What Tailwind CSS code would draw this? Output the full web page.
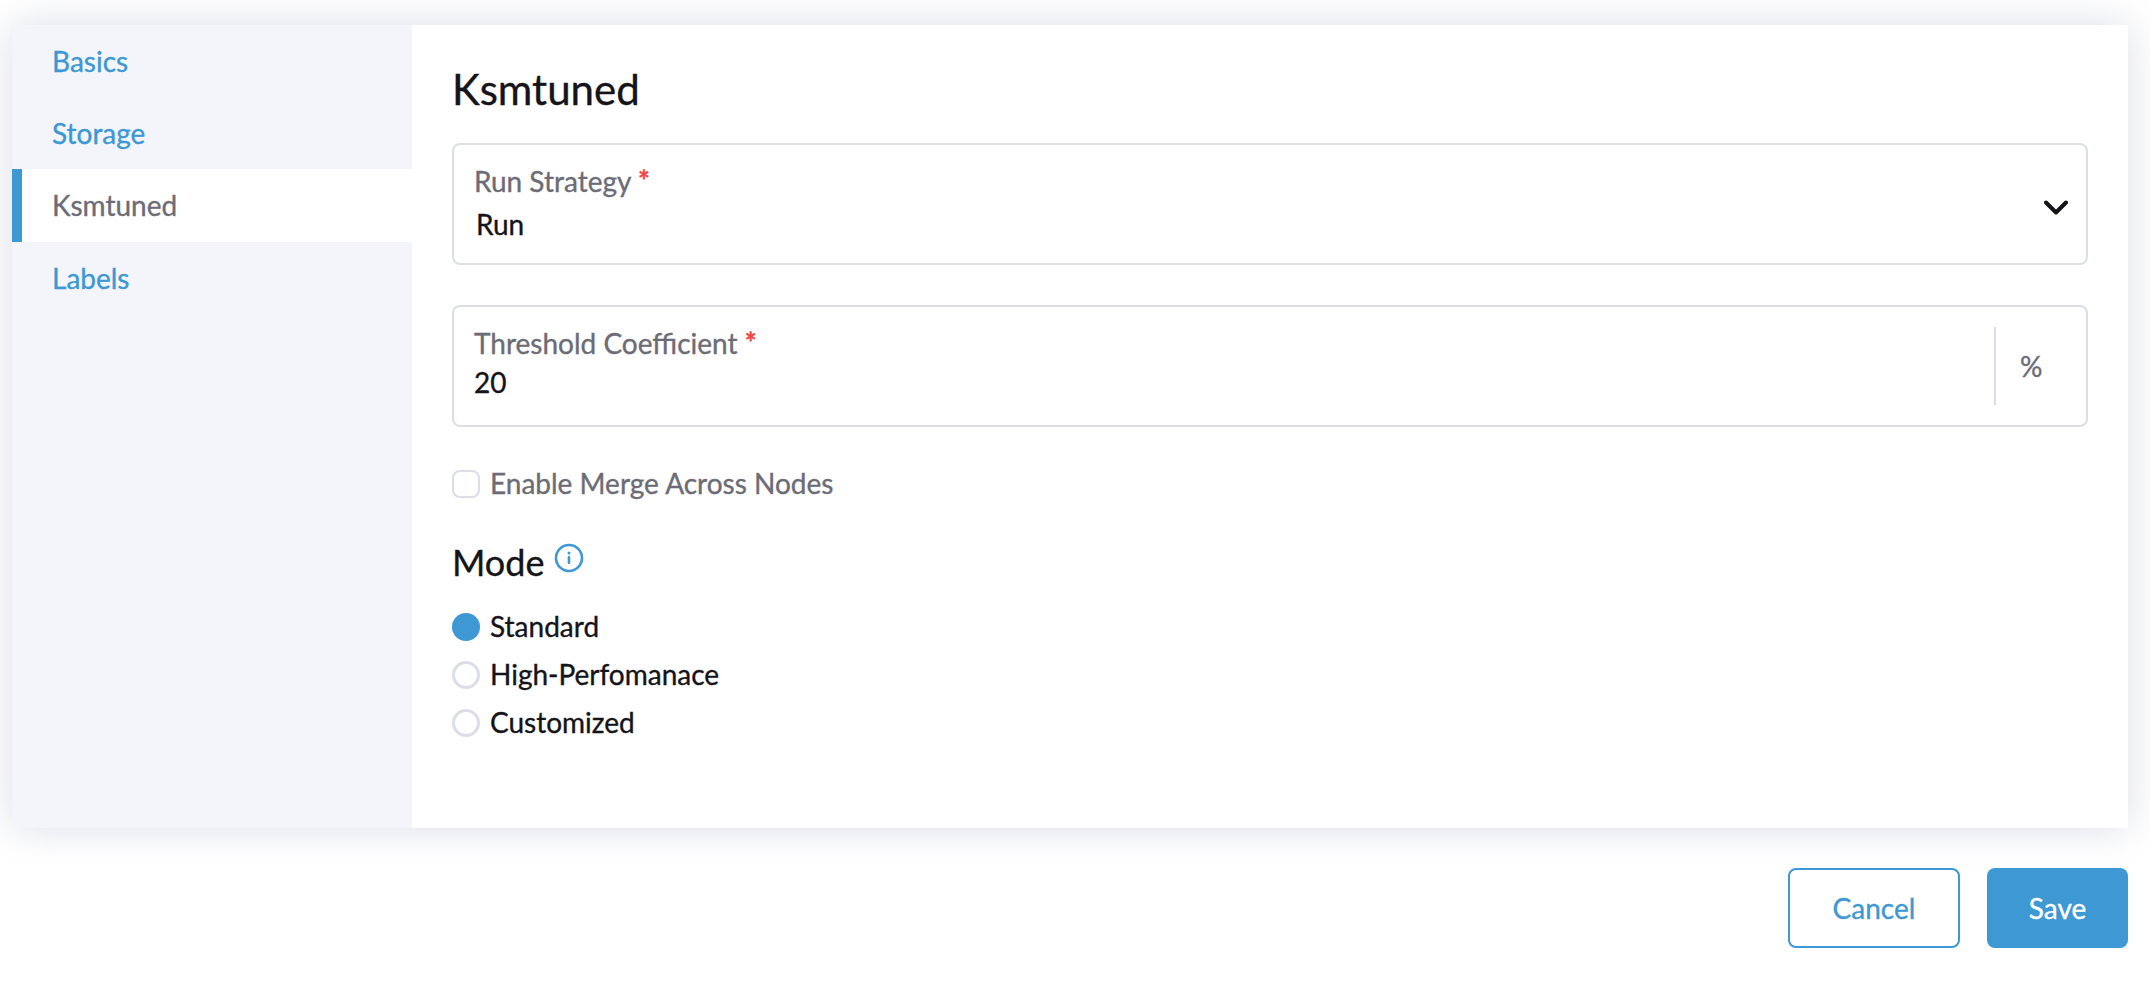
<!DOCTYPE html>
<html lang="en">
<head>
    <meta charset="UTF-8">
    <meta name="viewport" content="width=device-width, initial-scale=1.0">
    <title>Ksmtuned</title>

    <script src="https://cdn.jsdelivr.net/npm/@tailwindcss/browser@4"></script>
</head>

<body class="bg-white text-[#141419] text-[28px] leading-[34px] font-['Lato',sans-serif] [-webkit-text-stroke:0.35px] overflow-hidden">

<div class="pt-[25px] pl-3 pr-[22px]">

    <!-- Tabs + content -->
    <div class="flex h-[803px] shadow-[0_0_40px_#dcdee7]">
        <nav class="w-[400px] shrink-0 bg-[#f4f5fa] text-[#3d98d3]">
            <a href="#" class="flex items-center h-[72px] pl-10">Basics</a>
            <a href="#" class="flex items-center h-[72px] pl-10">Storage</a>
            <a href="#" class="flex items-center h-[73px] pl-[30px] pb-[2px] border-l-10 border-[#3d98d3] bg-white text-[#6c6c76]">Ksmtuned</a>
            <a href="#" class="flex items-center h-[72px] pl-10">Labels</a>
        </nav>

        <main class="flex-1 bg-white p-10">
            <h1 class="text-[42px] leading-[48px] mb-[30px]">Ksmtuned</h1>

            <!-- Run strategy -->
            <div class="flex items-center justify-between h-[122px] mb-10 border-2 border-[#dcdee7] rounded-lg pl-5 pr-[18px]">
                <div class="self-start pt-[19px]">
                    <label class="block text-[#6c6c76]">Run Strategy <span class="text-[#f64747] [-webkit-text-stroke:0.8px]">*</span></label>
                    <div class="mt-[9px] pl-0.5">Run</div>
                </div>
                <svg class="w-6 h-4 mt-2" viewBox="0 0 24 16" fill="none" stroke="#141419" stroke-width="4" stroke-linecap="round" stroke-linejoin="round">
                    <path d="M2 2.5L12 12.5L22 2.5"/>
                </svg>
            </div>

            <!-- Threshold -->
            <div class="flex items-center h-[122px] border-2 border-[#dcdee7] rounded-lg pl-5">
                <div class="self-start flex-1 pt-[19px]">
                    <label for="threshold" class="block text-[#6c6c76]">Threshold Coefficient <span class="text-[#f64747] [-webkit-text-stroke:0.8px]">*</span></label>
                    <input type="text" id="threshold" value="20" class="block mt-[5px] w-full h-[34px] outline-none">
                </div>
                <div class="flex items-center w-[92px] h-[78px] pl-6 border-l-2 border-[#dcdee7] text-[#6c6c76]">%</div>
            </div>

            <label class="flex items-start mt-[39px] text-[#6c6c76]">
                <span class="w-7 h-7 mt-1 mr-2.5 border-2 border-[#dcdee7] rounded-lg"></span>
                Enable Merge Across Nodes
            </label>

            <!-- Mode -->
            <h3 class="flex items-start mt-10 text-[36px] leading-[44px]">
                Mode
                <svg class="w-[30px] h-[30px] ml-2.5 mt-[3px]" viewBox="0 0 30 30" fill="none" stroke="#3d98d3">
                    <circle cx="15" cy="15" r="13" stroke-width="2.6"/>
                    <path d="M15 14.2V19.8" stroke-width="2.6" stroke-linecap="round"/>
                    <circle cx="15" cy="10" r="1.5" fill="#3d98d3" stroke="none"/>
                </svg>
            </h3>

            <div class="mt-[25px] space-y-3.5">
                <label class="flex items-start">
                    <span class="w-7 h-7 mt-1 mr-2.5 rounded-full bg-[#3d98d3]"></span>
                    Standard
                </label>
                <label class="flex items-start">
                    <span class="w-7 h-7 mt-1 mr-2.5 rounded-full border-3 border-[#dcdee7]"></span>
                    High-Perfomanace
                </label>
                <label class="flex items-start">
                    <span class="w-7 h-7 mt-1 mr-2.5 rounded-full border-3 border-[#dcdee7]"></span>
                    Customized
                </label>
            </div>
        </main>
    </div>

    <!-- Footer -->
    <div class="relative flex justify-end gap-[27px] mt-10">
        <button class="w-[172px] h-20 border-2 border-[#3d98d3] rounded-lg bg-white text-[#3d98d3]">Cancel</button>
        <button class="w-[141px] h-20 rounded-lg bg-[#3d98d3] text-white">Save</button>
    </div>
</div>

</body>
</html>
